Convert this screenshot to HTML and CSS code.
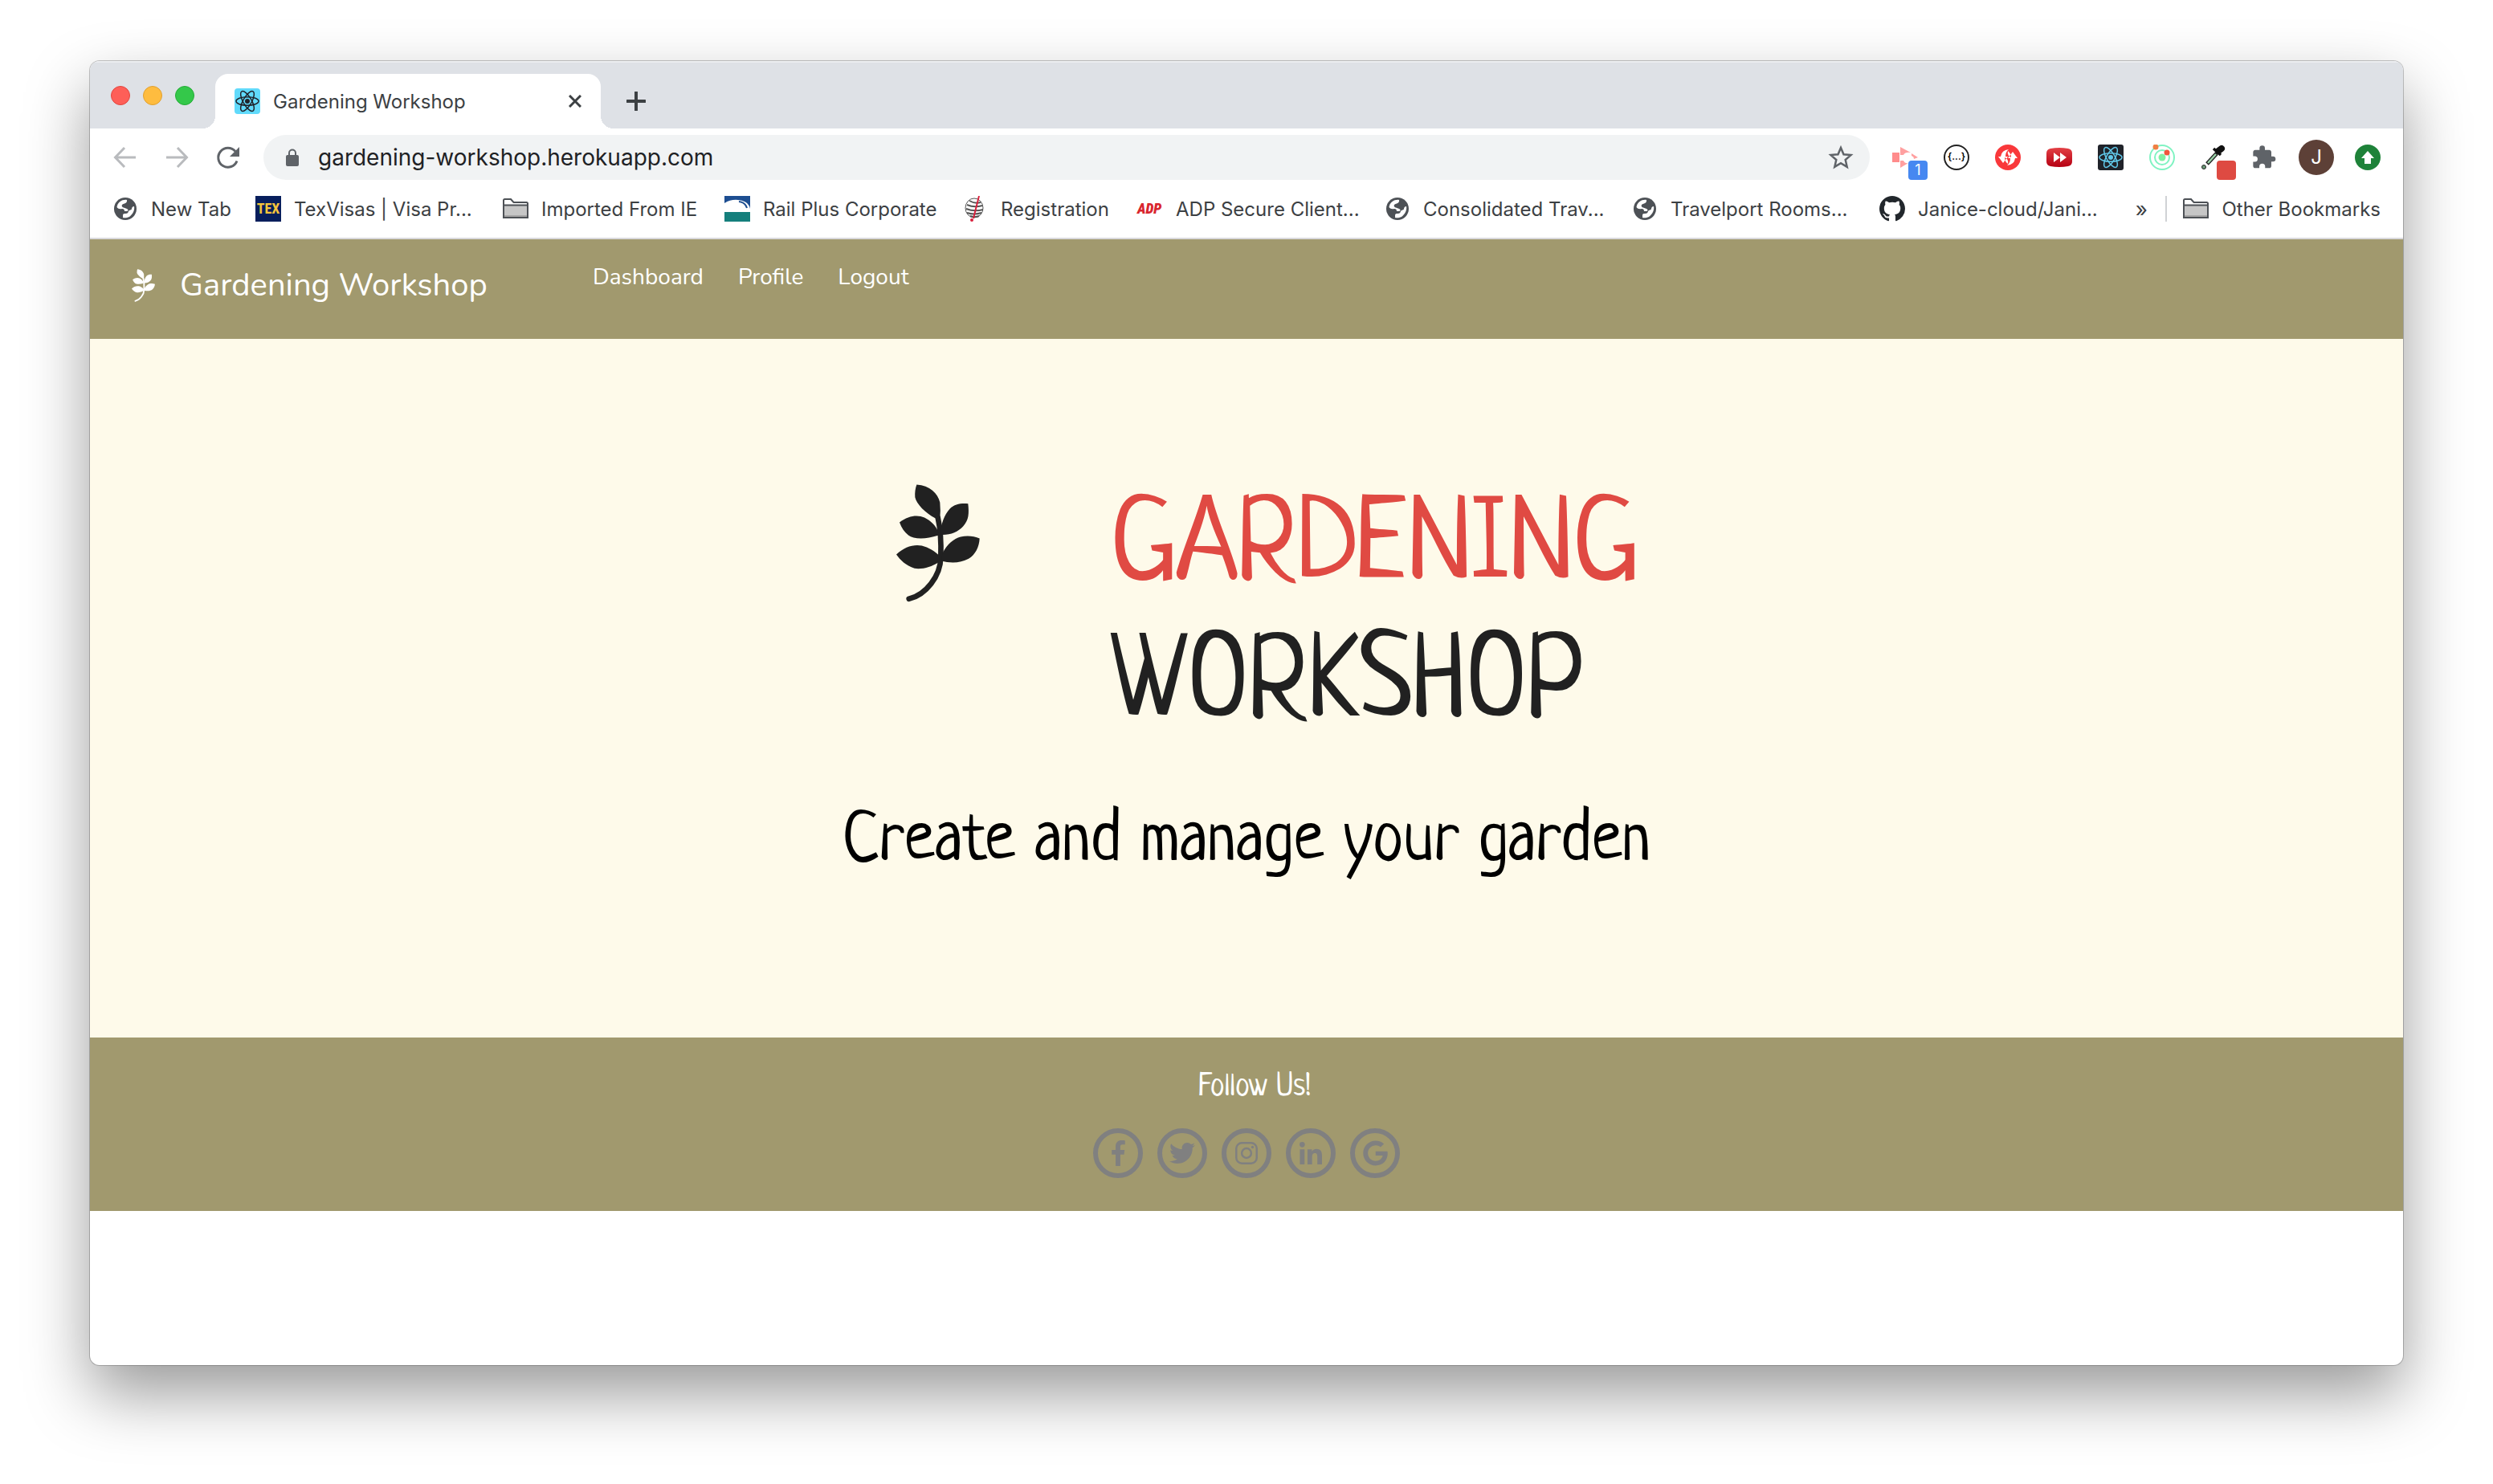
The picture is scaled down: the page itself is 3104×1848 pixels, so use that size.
FILE: index.html
```html
<!DOCTYPE html>
<html lang="en">
<head>
<meta charset="utf-8">
<title>Gardening Workshop</title>
<link rel="stylesheet" href="styles.css">
</head>
<body>
<svg class="defs" aria-hidden="true">
  <symbol id="plant" viewBox="50 42 312 440">
    <path d="M97 470C160 455 215 385 216 315C218 260 214 205 205 165" fill="none" stroke="currentColor" stroke-width="20" stroke-linecap="round"/>
    <path fill="currentColor" d="M126 43C175 46 205 75 213 110Q216 140 213 172L195 168C160 150 125 115 120 90Q118 65 126 43zM318 114C322 150 321 175 300 198C280 220 250 232 216 230C215 190 230 155 250 133C268 115 290 112 318 114zM62 184C95 158 130 155 155 166C180 178 200 200 208 222L206 233C160 248 115 248 95 232C80 220 70 205 62 184zM361 244C360 275 345 305 320 320C290 337 250 337 218 328L222 300C240 265 265 245 290 238C315 232 340 235 361 244zM50 304C80 275 115 265 145 271C170 277 195 292 212 310L208 333C180 350 150 360 118 356C85 345 65 325 50 304z"/>
  </symbol>
  <symbol id="atom" viewBox="0 0 32 32">
    <g fill="none" stroke="currentColor" stroke-width="1.5"><ellipse cx="16" cy="16" rx="14" ry="5.2"/><ellipse cx="16" cy="16" rx="14" ry="5.2" transform="rotate(60 16 16)"/><ellipse cx="16" cy="16" rx="14" ry="5.2" transform="rotate(120 16 16)"/></g><circle cx="16" cy="16" r="3" fill="currentColor"/>
  </symbol>
  <symbol id="globe" viewBox="0 0 32 32">
    <circle cx="16" cy="16" r="14" fill="#4d5156"/>
    <path fill="#fff" d="M18 5C11 4 6 9 5.500 14C7 16 9 16.500 12 16C14 16 15 17 15 19H18C20 18.500 20 17 18 16L14 14.500C11 13.500 11 11 13.500 10C16 9.500 18.500 8.500 18 5zM27 13C28 18 25 23 21 26C18 27.500 15 27.500 13 27V24C13 22.500 14 22 16 22C19 22 19.500 21 20 19C21 17 24 18 24 16C24 14.500 25 13 27 13z"/>
  </symbol>
  <symbol id="folder" viewBox="0 0 32 32">
    <path d="M1 27V5.500Q1 4 2.500 4H10L13.500 8H29.500Q31 8 31 9.500V27z" fill="#fff" stroke="#4d5156" stroke-width="2"/><path d="M2 12h28v14H2z" fill="#c6c6c6"/><path d="M1 11.500h30" stroke="#4d5156" stroke-width="2"/><path d="M2 25h28" stroke="#a5a5a5" stroke-width="2"/>
  </symbol>
</svg>

<div class="window">
  <header class="chrome">
    <div class="tabs">
      <div class="lights"><span class="light close-light"></span><span class="light min-light"></span><span class="light max-light"></span></div>
      <div class="tab">
        <svg class="icon favicon"><use href="#atom"/></svg>
        <span class="tab-title">Gardening Workshop</span>
        <button class="tab-close" aria-label="Close tab"><svg viewBox="0 0 16 16" width="16" height="16"><path d="M1 1l14 14M15 1L1 15" stroke="#3c4043" stroke-width="3"/></svg></button>
      </div>
      <button class="new-tab" aria-label="New tab"><svg viewBox="0 0 24 24" width="24" height="24"><path d="M12 1v22M1 12h22" stroke="#3c4043" stroke-width="4" stroke-linecap="round"/></svg></button>
    </div>

    <div class="toolbar">
      <div class="nav-buttons">
        <button aria-label="Back"><svg viewBox="0 0 32 32" width="32" height="32"><path d="M29 16H4M15 4L3.500 16L15 28" fill="none" stroke="#b9bbbe" stroke-width="3"/></svg></button>
        <button aria-label="Forward"><svg viewBox="0 0 32 32" width="32" height="32"><path d="M3 16h25M17 4l11.500 12L17 28" fill="none" stroke="#b9bbbe" stroke-width="3"/></svg></button>
        <button aria-label="Reload"><svg viewBox="0 0 32 32" width="32" height="32"><path d="M27 20.500A12 12 0 1 1 25 8.500" fill="none" stroke="#5f6368" stroke-width="3"/><path d="M30 3v12H18z" fill="#5f6368"/></svg></button>
      </div>
      <div class="omnibox">
        <svg viewBox="0 0 16 22" width="16" height="22"><rect y="8" width="16" height="14" rx="2" fill="#5f6368"/><path d="M4 9V5.500a4 4 0 0 1 8 0V9" fill="none" stroke="#5f6368" stroke-width="2"/></svg>
        <input type="text" aria-label="Address" value="gardening-workshop.herokuapp.com">
        <button aria-label="Bookmark this page"><svg viewBox="0 0 32 32" width="32" height="32"><path d="M16 4l3.500 8.300 9 .8-6.800 5.900 2 8.800-7.700-4.700-7.700 4.700 2-8.800-6.800-5.900 9-.8z" fill="none" stroke="#5f6368" stroke-width="2.500"/></svg></button>
      </div>
      <div class="extensions">
        <button aria-label="Recorder"><svg class="icon" viewBox="0 0 32 32"><path fill="#ff8c8c" d="M0 10h9v12H0z"/><path fill="#ffa0a0" d="M10 3l13 7q-7-1-9 3h-4zM24 11l8 5-5 2q0-3-3-4zM10 20h4q2 4 6 3l-10 6z"/></svg><span class="badge blue">1</span></button>
        <button aria-label="JSON"><span class="json">{...}</span></button>
        <button aria-label="Sync"><svg class="icon" viewBox="0 0 32 32"><circle cx="16" cy="16" r="16" fill="#f9383b"/><path fill="#fff" d="M17 6Q8 7 7 15H4l6 8 6-8h-3Q13 9 17 6zM15 26q9-1 10-9h3l-6-8-6 8h3q0 6-4 9zM16 8q4 3 4 8l-3-2q-2-3-1-6zM16 24q-4-3-4-8l3 2q2 3 1 6z"/></svg></button>
        <button aria-label="Speed"><svg class="icon" viewBox="0 0 32 32"><defs><linearGradient id="red" x2="0" y2="1"><stop stop-color="#e34045"/><stop offset="1" stop-color="#b50012"/></linearGradient></defs><path d="M5 5Q16 3 27 5Q32 6 32 11V21Q32 26 27 27Q16 29 5 27Q0 26 0 21V11Q0 6 5 5z" fill="url(#red)"/><path d="M9 10l8 6-8 6zM17 10l8 6-8 6z" fill="#fff"/></svg></button>
        <button aria-label="React tools"><svg class="icon react"><use href="#atom"/></svg></button>
        <button aria-label="Orbit"><svg class="icon" viewBox="0 0 32 32"><circle cx="16" cy="16" r="15" fill="none" stroke="#80f3c2" stroke-width="2"/><circle cx="16" cy="16" r="9" fill="none" stroke="#80f3c2" stroke-width="2"/><circle cx="16" cy="16" r="4.500" fill="#80f0a4"/><circle cx="8" cy="3" r="3.500" fill="#ef8044"/><circle cx="22" cy="10" r="3.500" fill="#f0563c"/></svg></button>
        <button aria-label="Colour picker"><svg class="icon" viewBox="0 0 32 32"><path d="M20 11L8 24" stroke="#222" stroke-width="5"/><path d="M19 12L9 23" stroke="#9bd3a8" stroke-width="2.500"/><path d="M22 8l4-3" stroke="#111" stroke-width="8" stroke-linecap="round"/><path d="M16 5l9 8" stroke="#111" stroke-width="3.500"/><circle cx="4" cy="28" r="2.500" fill="#6d9c7a" stroke="#222"/></svg><span class="badge red"></span></button>
        <button aria-label="Extensions"><svg class="icon" viewBox="1 0 24 24"><path fill="#5f6368" d="M20.500 11H19V7c0-1.100-.9-2-2-2h-4V3.500a2.500 2.500 0 0 0-5 0V5H4c-1.100 0-2 .9-2 2v3.800h1.500a2.700 2.700 0 0 1 0 5.400H2V20c0 1.100.9 2 2 2h3.800v-1.500a2.700 2.700 0 0 1 5.400 0V22H17c1.100 0 2-.9 2-2v-4h1.500a2.500 2.500 0 0 0 0-5z"/></svg></button>
        <button aria-label="Profile J"><span class="avatar">J</span></button>
        <button aria-label="Update"><svg class="icon" viewBox="0 0 32 32"><circle cx="16" cy="16" r="16" fill="#1e8239"/><path d="M16 8l8 9h-4v7h-8v-7H8z" fill="#fff"/></svg></button>
      </div>
    </div>

    <nav class="bookmarks" aria-label="Bookmarks">
      <a href="#"><svg class="icon"><use href="#globe"/></svg>New Tab</a>
      <a href="#"><span class="icon tex">TEX</span>TexVisas | Visa Pr...</a>
      <a href="#"><svg class="icon"><use href="#folder"/></svg>Imported From IE</a>
      <a href="#"><svg class="icon" viewBox="0 0 32 32"><path fill="#fff" d="M0 0h32v32H0z"/><path fill="#1d4e91" d="M0 0h32v16q-2-10-15-11Q8 4 0 9z"/><path d="M18 7q8 1 10 8" stroke="#1d4e91" stroke-width="2" fill="none"/><path fill="#157f7c" d="M0 20h32v12H0z"/></svg>Rail Plus Corporate</a>
      <a href="#"><svg class="icon" viewBox="0 0 32 32"><g fill="none" stroke="#555" stroke-width="2"><ellipse cx="15" cy="15" rx="11" ry="12" stroke-width="1"/><path d="M9 6q7 4 14 2M6 11q9 4 19 1M5 16q10 4 21 1M6 21q9 3 18 0M10 25q6 2 11 0"/></g><path d="M21 0l-7 28" stroke="#d8203c" stroke-width="2"/><circle cx="12" cy="30" r="2" fill="#d8203c"/></svg>Registration</a>
      <a href="#"><span class="icon adp">ADP</span>ADP Secure Client...</a>
      <a href="#"><svg class="icon"><use href="#globe"/></svg>Consolidated Trav...</a>
      <a href="#"><svg class="icon"><use href="#globe"/></svg>Travelport Rooms...</a>
      <a href="#"><svg class="icon" viewBox="0 0 16 16"><path fill="#22272c" d="M8 0C3.580 0 0 3.580 0 8c0 3.540 2.290 6.530 5.470 7.590.4.070.55-.17.55-.38 0-.19-.01-.82-.01-1.490-2.010.37-2.530-.49-2.690-.94-.09-.23-.48-.94-.82-1.130-.28-.15-.68-.52-.01-.53.63-.01 1.080.58 1.230.82.72 1.210 1.870.87 2.330.66.07-.52.28-.87.51-1.070-1.780-.2-3.640-.89-3.640-3.950 0-.87.31-1.590.82-2.150-.08-.2-.36-1.020.08-2.120 0 0 .67-.21 2.200.82.64-.18 1.320-.27 2-.27s1.360.09 2 .27c1.530-1.040 2.200-.82 2.200-.82.44 1.100.16 1.920.08 2.120.51.56.82 1.270.82 2.150 0 3.070-1.870 3.750-3.650 3.950.29.25.54.73.54 1.480 0 1.070-.01 1.930-.01 2.200 0 .21.15.46.55.38A8.010 8.010 0 0 0 16 8c0-4.420-3.580-8-8-8z"/></svg>Janice-cloud/Jani...</a>
      <button class="more" aria-label="More bookmarks">»</button>
      <a class="other" href="#"><svg class="icon"><use href="#folder"/></svg>Other Bookmarks</a>
    </nav>
  </header>

  <nav class="navbar" aria-label="Main">
    <a class="brand" href="#"><svg class="brand-icon"><use href="#plant"/></svg>Gardening Workshop</a>
    <div class="links"><a href="#">Dashboard</a><a href="#">Profile</a><a href="#">Logout</a></div>
  </nav>

  <main class="hero">
    <div class="hero-head">
      <svg class="hero-icon"><use href="#plant"/></svg>
      <h1><span>GARDENING</span><br>WORKSHOP</h1>
    </div>
    <p>Create and manage your garden</p>
  </main>

  <footer class="footer">
    <h2>Follow Us!</h2>
    <div class="social">
      <a href="#" aria-label="Facebook"><svg viewBox="0 0 264 512" width="17" height="32"><path d="M76.700 512V283H0v-91h76.700v-71.700C76.700 42.400 124.300 0 193.800 0c33.300 0 61.900 2.500 70.200 3.600V85h-48.200c-37.800 0-45.100 18-45.100 44.300V192H256l-11.700 91h-73.600v229"/></svg></a>
      <a href="#" aria-label="Twitter"><svg viewBox="0 0 512 512" width="32" height="32"><path d="M459.370 151.716c.325 4.548.325 9.097.325 13.645 0 138.720-105.583 298.558-298.558 298.558-59.452 0-114.680-17.219-161.137-47.106 8.447.974 16.568 1.299 25.340 1.299 49.055 0 94.213-16.568 130.274-44.832-46.132-.975-84.792-31.188-98.112-72.772 6.498.974 12.995 1.624 19.818 1.624 9.421 0 18.843-1.300 27.614-3.573-48.081-9.747-84.143-51.980-84.143-102.985v-1.299c13.969 7.797 30.214 12.670 47.431 13.319-28.264-18.843-46.781-51.005-46.781-87.391 0-19.492 5.197-37.360 14.294-52.954 51.655 63.675 129.300 105.258 216.365 109.807-1.624-7.797-2.599-15.918-2.599-24.040 0-57.828 46.782-104.934 104.934-104.934 30.213 0 57.502 12.670 76.670 33.137 23.715-4.548 46.456-13.320 66.599-25.340-7.798 24.366-24.366 44.833-46.132 57.827 21.117-2.273 41.584-8.122 60.426-16.243-14.292 20.791-32.161 39.308-52.628 54.253z"/></svg></a>
      <a href="#" aria-label="Instagram"><svg viewBox="0 0 28 28" width="28" height="28"><rect x="1.250" y="1.250" width="25.500" height="25.500" rx="7" fill="none" stroke="currentColor" stroke-width="2.500"/><circle cx="14" cy="14" r="5.900" fill="none" stroke="currentColor" stroke-width="2.500"/><circle cx="21.500" cy="6.500" r="1.700"/></svg></a>
      <a href="#" aria-label="LinkedIn"><svg viewBox="0 0 448 448" width="28" height="28"><path d="M100.300 448H7.400V148.900h92.900zM53.800 108.100C24.100 108.100 0 83.500 0 53.800a53.800 53.800 0 0 1 107.600 0c0 29.700-24.100 54.300-53.800 54.300zM447.900 448h-92.700V302.400c0-34.700-.7-79.200-48.300-79.200-48.300 0-55.700 37.700-55.700 76.700V448h-92.800V148.900h89.100v40.800h1.300c12.400-23.500 42.700-48.300 87.900-48.300 94 0 111.300 61.900 111.300 142.300V448z"/></svg></a>
      <a href="#" aria-label="Google"><svg viewBox="0 0 488 512" width="31" height="32"><path d="M488 261.800C488 403.300 391.100 504 248 504 110.800 504 0 393.200 0 256S110.800 8 248 8c66.800 0 123 24.500 166.300 64.900l-67.500 64.900C258.500 52.600 94.300 116.600 94.300 256c0 86.500 69.100 156.600 153.700 156.600 98.200 0 135-70.400 140.800-106.900H248v-85.300h236.100c2.300 12.700 3.900 24.900 3.900 41.400z"/></svg></a>
    </div>
  </footer>
</div>
</body>
</html>
```
FILE: styles.css
```css
* { box-sizing: border-box; }
body {
  margin: 0;
  min-height: 100vh;
  padding: 76px 112px 148px;
  display: flex;
  background: #fff;
  font-family: Inter, "Liberation Sans", sans-serif;
}
h1, h2, p { margin: 0; font-weight: 400; }
a { color: inherit; text-decoration: none; }
button { padding: 0; border: 0; background: none; color: inherit; font: inherit; display: flex; align-items: center; justify-content: center; }
svg { display: block; flex: none; }
.defs { position: absolute; width: 0; height: 0; }
.icon { width: 32px; height: 32px; flex: none; }

.window {
  flex: 1;
  min-width: 0;
  border-radius: 12px;
  overflow: hidden;
  background: #fff;
  box-shadow: 0 0 0 1px rgba(0, 0, 0, .22), 0 36px 80px rgba(0, 0, 0, .4);
}

/* Browser chrome */
.chrome { color: #3c4043; border-bottom: 2px solid #d9d9dc; }
.tabs {
  height: 84px;
  padding: 16px 26px 0;
  display: flex;
  background: #dee1e6;
  box-shadow: inset 0 2px #ebedf0;
}
.lights { display: flex; gap: 16px; padding-top: 15px; width: 130px; }
.light { width: 24px; height: 24px; border-radius: 50%; border: 1px solid; }
.close-light { background: #fe5f58; border-color: #e2463f; }
.min-light { background: #febc3f; border-color: #e0a030; }
.max-light { background: #34c84a; border-color: #24ac36; }
.tab {
  position: relative;
  width: 480px;
  padding: 0 24px;
  display: flex;
  align-items: center;
  gap: 16px;
  background: #fff;
  border-radius: 16px 16px 0 0;
  font-size: 24px;
}
.tab::before, .tab::after { content: ""; position: absolute; bottom: 0; width: 16px; height: 16px; }
.tab::before { left: -16px; background: radial-gradient(circle at 0 0, transparent 16px, #fff 16px); }
.tab::after { right: -16px; background: radial-gradient(circle at 100% 0, transparent 16px, #fff 16px); }
.favicon { background: #61dafb; border-radius: 4px; color: #20232a; }
.tab-title { flex: 1; }
.new-tab { width: 56px; margin-left: 16px; }

.toolbar { height: 72px; padding: 0 12px 0 28px; display: flex; align-items: center; }
.nav-buttons { display: flex; gap: 32px; width: 188px; }
.omnibox {
  flex: 1;
  min-width: 0;
  height: 56px;
  padding: 0 20px 0 28px;
  display: flex;
  align-items: center;
  gap: 24px;
  border-radius: 28px;
  background: #f1f3f4;
}
.omnibox input { flex: 1; min-width: 0; padding: 0; border: 0; background: none; font: inherit; font-size: 28px; color: #202124; }
.extensions { display: grid; grid-template-columns: repeat(10, 64px); margin-left: 12px; }
.extensions button { position: relative; height: 56px; }
.badge {
  position: absolute;
  left: 36px;
  bottom: 0;
  width: 24px;
  height: 24px;
  border-radius: 4px;
  color: #fff;
  font-size: 18px;
  line-height: 24px;
}
.blue { background: #4688f1; }
.red { background: #de4a42; }
.json { width: 32px; height: 32px; border: 2px solid #222; border-radius: 50%; background: #fff; color: #000; font-size: 12px; font-weight: 600; line-height: 26px; }
.react { background: #20232a; border-radius: 3px; color: #61c9ea; }
.avatar { width: 44px; height: 44px; border-radius: 50%; background: #5d4037; color: #fff; font-size: 24px; line-height: 44px; }

.bookmarks {
  height: 64px;
  padding: 0 28px 8px;
  display: grid;
  grid-template-columns: 178px 308px 276px 296px 218px 308px 308px 308px 1fr 60px auto;
  align-items: center;
  font-size: 24px;
  white-space: nowrap;
}
.bookmarks a { display: flex; align-items: center; gap: 16px; }
.bookmarks .other { border-left: 2px solid #d0d2d5; padding-left: 20px; }
.more { font-size: 26px; }
.tex { background: #071e5c; color: #f5c53c; font: 700 18px/32px "Roboto Condensed", Roboto, sans-serif; text-align: center; }
.adp { color: #d9262e; font: italic 900 18px/32px "Roboto Condensed", Roboto, sans-serif; }

/* Site */
.navbar { height: 124px; padding: 25px 50px; display: flex; background: #a1996e; color: #fff; font-family: Nunito, "Open Sans", sans-serif; }
.brand { height: 64px; width: 576px; padding-left: 2px; display: flex; align-items: center; gap: 31px; font-size: 40px; }
.brand-icon { width: 29px; height: 41px; }
.links { display: flex; gap: 43px; font-size: 28px; line-height: 44px; }

.hero { padding: 175px 0 189px; background: #fefaea; color: #000; font-family: Neucha, "Patrick Hand", cursive; text-align: center; }
.hero-head { padding: 0 0 0 52px; display: flex; justify-content: center; gap: 163px; color: #212121; text-align: left; }
.hero-icon { width: 104px; height: 147px; margin-top: 6px; }
.hero h1 { font-size: 144px; line-height: 172px; }
.hero h1 span { color: #e04a43; }
.hero p { margin-top: 56px; font-size: 86px; line-height: 106px; }

.footer { padding: 34px 0 41px; background: #a1996e; color: #fff; font-family: Neucha, "Patrick Hand", cursive; text-align: center; }
.footer h2 { padding-left: 20px; font-size: 40px; line-height: 56px; }
.social { margin-top: 23px; display: flex; justify-content: center; gap: 18px; color: #808080; }
.social a { width: 62px; height: 62px; border: 6px solid; border-radius: 50%; display: flex; align-items: center; justify-content: center; }
.social svg { fill: currentColor; }
```
